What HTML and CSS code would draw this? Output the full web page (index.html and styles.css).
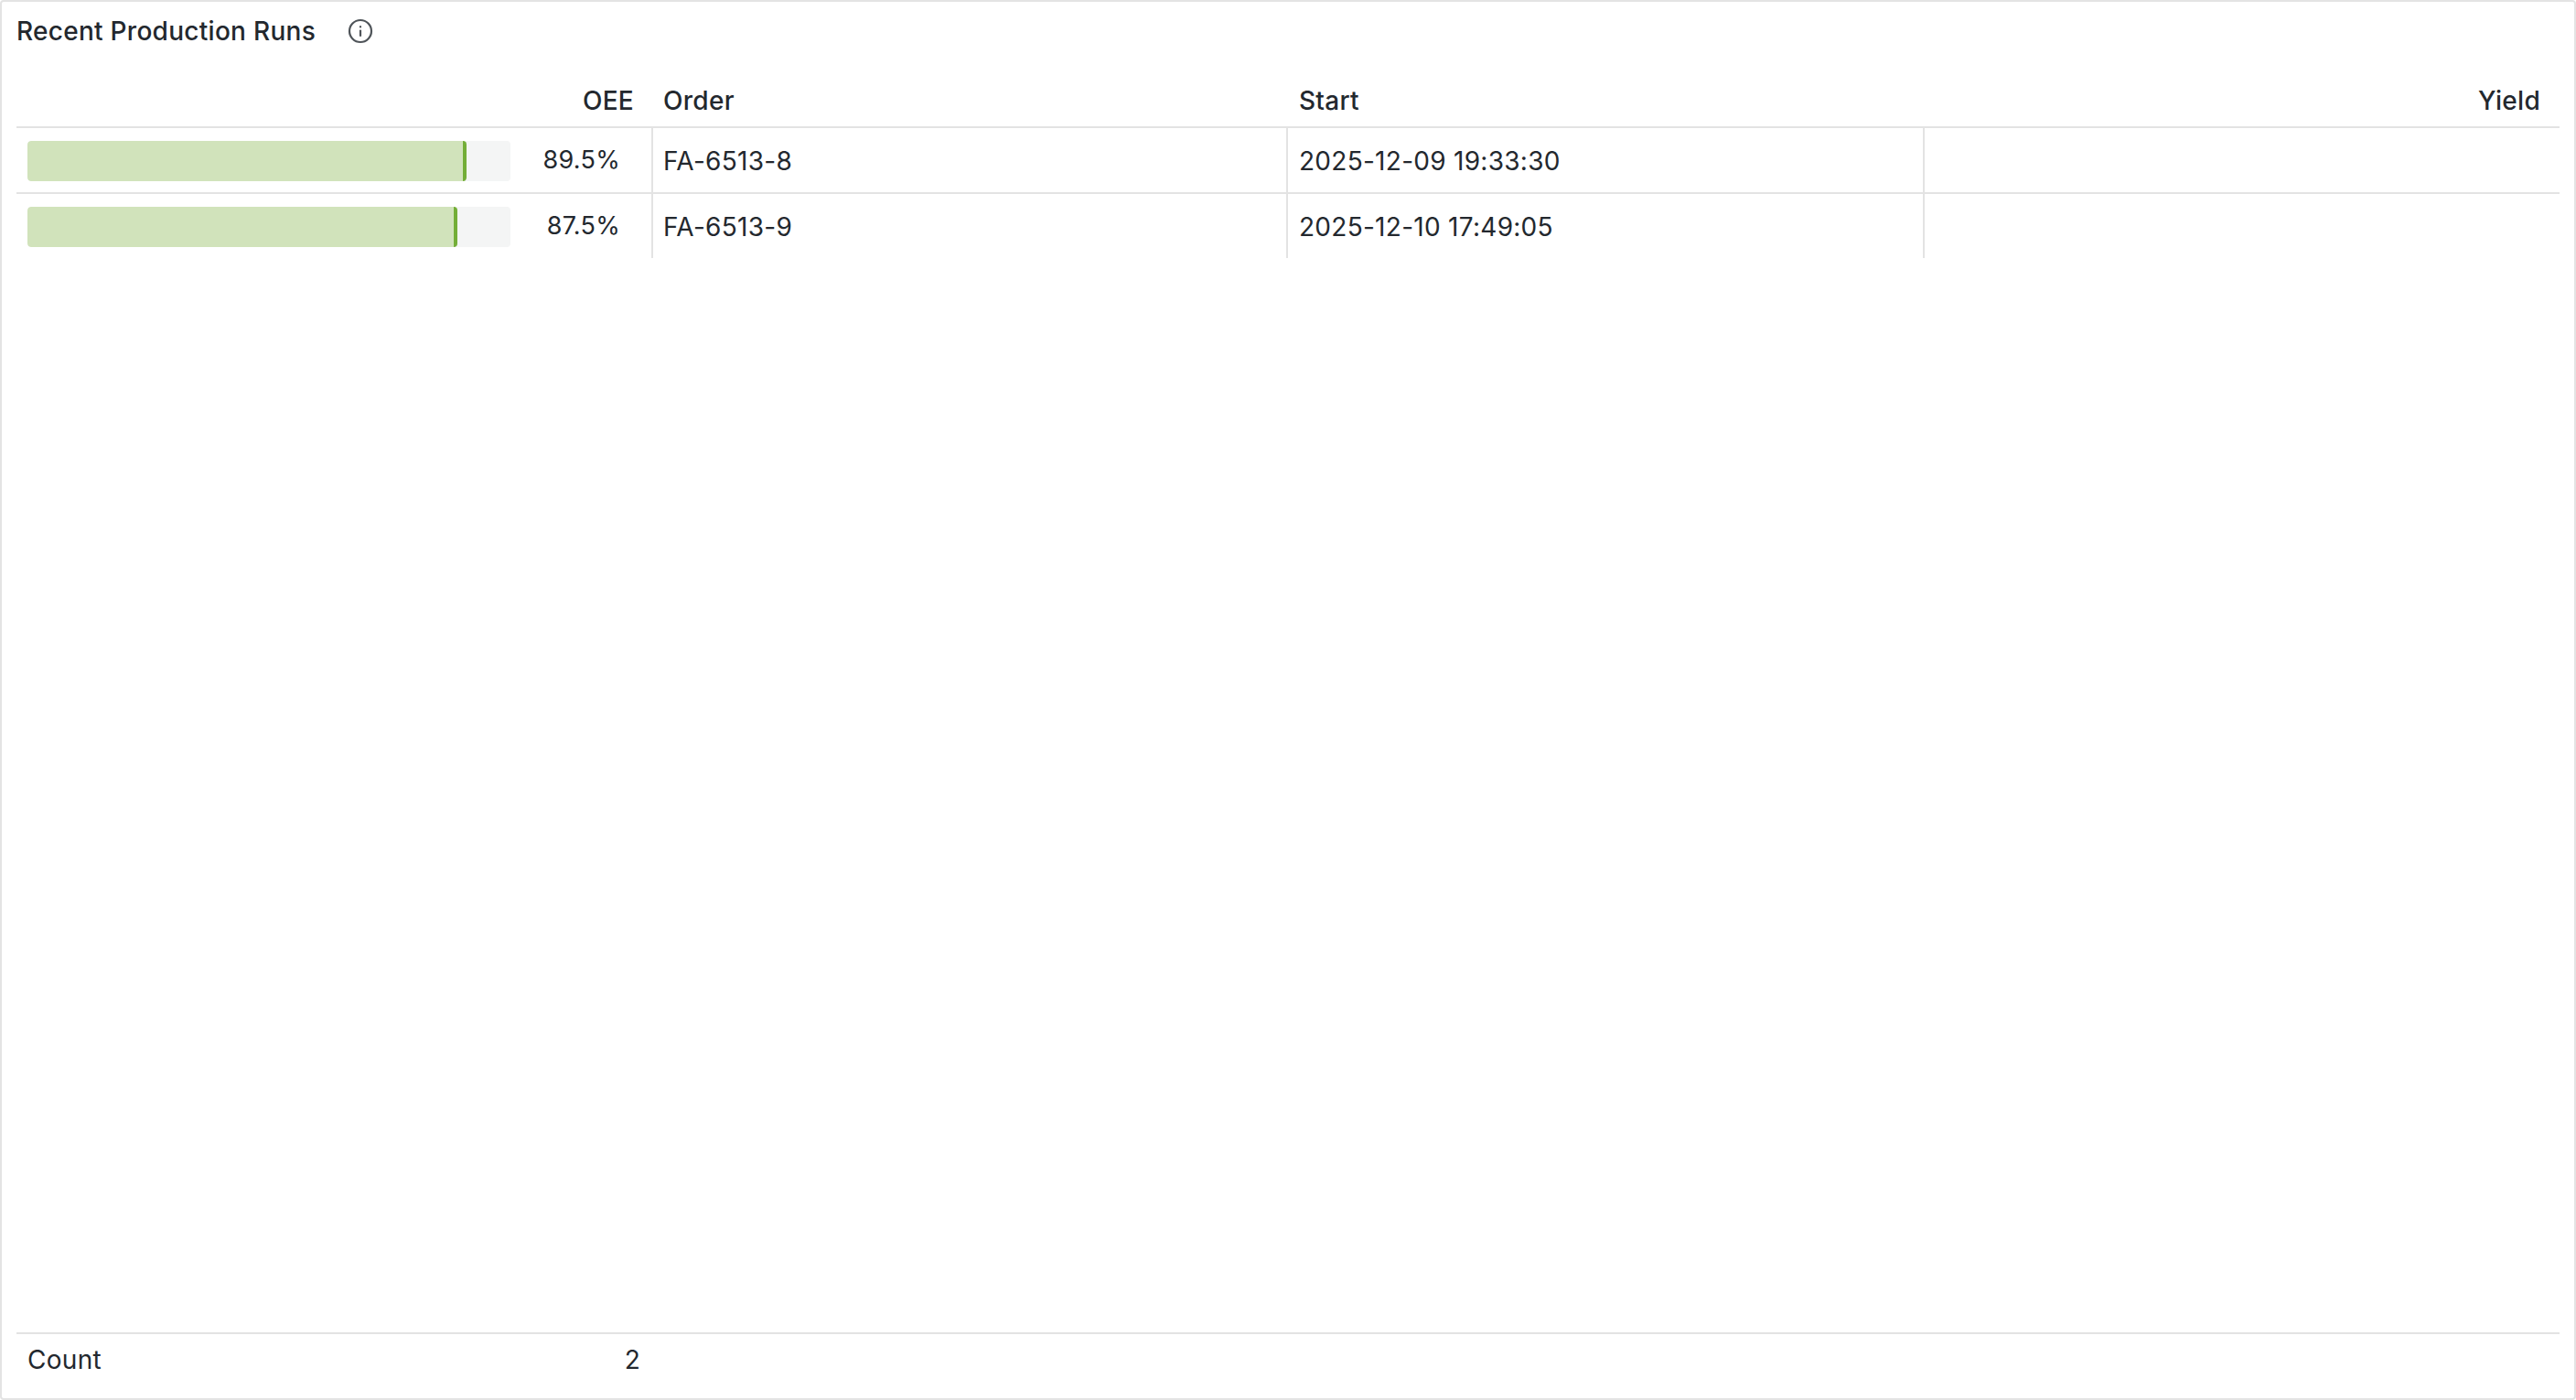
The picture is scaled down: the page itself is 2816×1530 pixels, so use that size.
FILE: index.html
```html
<!DOCTYPE html>
<html lang="en">
<head>
<meta charset="utf-8">
<title>Recent Production Runs</title>
<link rel="stylesheet" href="styles.css">
</head>
<body>
<section class="card">
  <header class="card-head">
    <h2 class="title">Recent Production Runs</h2>
    <svg class="info" viewBox="0 0 28 28" width="28" height="28" fill="none" stroke="#4f5459" stroke-width="2.2" stroke-linecap="round" aria-hidden="true">
      <circle cx="14" cy="14" r="12"/>
      <path d="M14 13.5V19"/>
      <path d="M14 9.2V9.4"/>
    </svg>
  </header>
  <div class="table-wrap">
    <table class="runs">
      <colgroup><col class="c1"><col class="c2"><col class="c3"><col class="c4"></colgroup>
      <thead>
        <tr>
          <th class="num">OEE</th>
          <th class="order">Order</th>
          <th>Start</th>
          <th class="num">Yield</th>
        </tr>
      </thead>
      <tbody>
        <tr>
          <td class="oee">
            <div class="oee-cell">
              <div class="track"><div class="fill" style="width:480px"></div></div>
              <span class="val">89.5%</span>
            </div>
          </td>
          <td class="order">FA-6513-8</td>
          <td>2025-12-09 19:33:30</td>
          <td class="last"></td>
        </tr>
        <tr>
          <td class="oee">
            <div class="oee-cell">
              <div class="track"><div class="fill" style="width:470px"></div></div>
              <span class="val">87.5%</span>
            </div>
          </td>
          <td class="order">FA-6513-9</td>
          <td>2025-12-10 17:49:05</td>
          <td class="last"></td>
        </tr>
      </tbody>
    </table>
  </div>
  <footer class="summary">
    <div class="summary-cell"><span>Count</span><span>2</span></div>
  </footer>
</section>
</body>
</html>
```
FILE: styles.css
```css
* { box-sizing: border-box; }
html, body { margin: 0; height: 100%; background: #fff; }
body {
  font-family: Inter, "Liberation Sans", sans-serif;
  color: #23282e;
  font-size: 28px;
  letter-spacing: 0.28px;
}
.card {
  height: 1530px;
  border: 2px solid #e3e3e3;
  border-radius: 4px;
  padding: 0 16px;
  display: flex;
  flex-direction: column;
  background: #fff;
}
.card-head {
  display: flex;
  align-items: center;
  gap: 35px;
  height: 62px;
  padding-top: 2px;
  flex: none;
}
.title {
  margin: 0;
  font-size: 28px;
  font-weight: 500;
  line-height: 34px;
}
.info { flex: none; }
.table-wrap { flex: 1; min-height: 0; }
.runs {
  width: 100%;
  border-collapse: separate;
  border-spacing: 0;
  table-layout: fixed;
}
.c1 { width: 696px; }
.c2 { width: 694px; }
.c3 { width: 696px; }
.runs th {
  height: 76px;
  padding: 18px 12px 0;
  font-size: 28px;
  font-weight: 500;
  text-align: left;
  border-bottom: 2px solid #e3e3e3;
}
.runs th.num { text-align: right; padding-right: 21px; }
.runs td {
  height: 72px;
  padding: 2px 12px 0;
  font-size: 28px;
  font-weight: 400;
  border-right: 2px solid #e3e3e3;
  border-bottom: 2px solid #e3e3e3;
}
.runs tbody tr:last-child td { border-bottom: 0; height: 70px; }
.runs td.last { border-right: 0; }
.runs td.oee { padding-right: 34px; }
.runs .order { padding-left: 11px; }
.oee-cell {
  display: flex;
  align-items: center;
  justify-content: space-between;
}
.track {
  width: 528px;
  height: 44px;
  background: #f4f5f5;
  border-radius: 4px;
  overflow: hidden;
}
.fill {
  height: 100%;
  background: #d1e3bb;
  border-right: 4px solid #73ae37;
  border-radius: 4px;
}
.val { position: relative; top: -2px; font-size: 27px; }
.summary {
  flex: none;
  height: 72px;
  border-top: 2px solid #e3e3e3;
}
.summary-cell {
  width: 696px;
  height: 56px;
  padding: 0 14px 0 12px;
  display: flex;
  align-items: center;
  justify-content: space-between;
  font-weight: 400;
}
```
